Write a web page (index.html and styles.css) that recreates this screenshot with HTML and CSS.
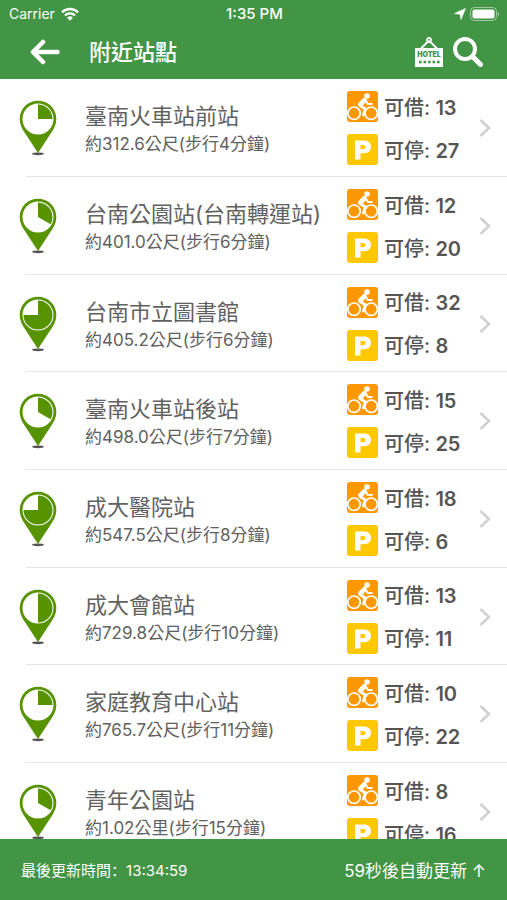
FILE: index.html
```html
<!DOCTYPE html>
<html lang="zh-Hant">
<head>
    <meta charset="UTF-8">
    <meta name="viewport" content="width=device-width, initial-scale=1.0">
    <title>附近站點</title>
    <link rel="stylesheet" href="styles.css">
</head>
<body>

    <!-- shared icons -->
    <svg class="sprite" aria-hidden="true">
        <symbol id="pin" viewBox="0 0 40 56">
            <ellipse cx="20" cy="53.8" rx="6" ry="1.4" fill="#555"/>
            <path d="M20 0.8C9.7 0.8 1.7 9 1.7 19c0 4.200 1.300 7.600 3.600 11.600L20 53l14.700-22.400c2.300-4 3.600-7.400 3.600-11.600C38.300 9 30.300 0.800 20 0.800z" fill="#579300"/>
            <circle cx="20" cy="19" r="15.500" fill="#fff"/>
        </symbol>
        <symbol id="bike" viewBox="0 0 31 31">
            <rect width="31" height="31" rx="3" fill="#ff9800"/>
            <g fill="none" stroke="#fff" stroke-linecap="round" stroke-linejoin="round">
                <circle cx="7" cy="22.200" r="6.200" stroke-width="1.700"/>
                <circle cx="24.200" cy="22.200" r="6.200" stroke-width="1.700"/>
                <path d="M17.300 9.300l-3.800 4" stroke-width="4.800"/>
                <path d="M12.800 14.500l5.400 3.300-1.700 6.200" stroke-width="2.800"/>
                <path d="M18.500 9l2.300 4h4" stroke-width="2"/>
            </g>
            <circle cx="20" cy="5" r="2.800" fill="#fff"/>
        </symbol>
        <symbol id="parking" viewBox="0 0 31 31">
            <rect width="31" height="31" rx="3" fill="#ffc800"/>
            <path d="M8 6.500h9c4.500 0 7 2.500 7 6.300s-2.700 6.400-7 6.400h-3.500v6.300H8zM13.500 11v4.200h2.700c1.500 0 2.300-.8 2.300-2.100s-.8-2.100-2.300-2.100z" fill="#fff" fill-rule="evenodd"/>
        </symbol>
        <symbol id="chevron" viewBox="0 0 12 20">
            <path d="M1.500 2l8.500 8-8.500 8" fill="none" stroke="#d0d0d0" stroke-width="2.500"/>
        </symbol>
    </svg>

    <header class="header">
        <div class="status">
            <div class="carrier">
                <span>Carrier</span>
                <svg class="wifi" viewBox="0 0 18 14">
                    <g fill="none" stroke="#fff" stroke-width="2.400">
                        <path d="M1 5.300a11.300 11.300 0 0 1 16 0"/>
                        <path d="M4 8.500a7 7 0 0 1 10 0"/>
                    </g>
                    <path d="M9 13.700l-2.900-2.900a4.100 4.100 0 0 1 5.800 0z" fill="#fff"/>
                </svg>
            </div>
            <div class="clock">1:35 PM</div>
            <div class="battery">
                <svg class="location" viewBox="0 0 12 12">
                    <path d="M11.500.5L7 11.500 6 6.200.5 5.500z" fill="#fff" stroke="#fff" stroke-width=".6"/>
                </svg>
                <svg class="level" viewBox="0 0 30 14">
                    <rect x=".5" y=".5" width="26" height="13" rx="4" fill="none" stroke="#fff" stroke-opacity=".5"/>
                    <rect x="2.500" y="2.500" width="22" height="9" rx="2" fill="#fff"/>
                    <path d="M28 5c1.500.5 1.500 3.500 0 4z" fill="#fff" fill-opacity=".6"/>
                </svg>
            </div>
        </div>
        <div class="nav">
            <button class="back" aria-label="返回">
                <svg viewBox="0 0 30 26">
                    <path d="M13 3L3 13l10 10M3.500 13H27.500" fill="none" stroke="#fff" stroke-width="4.500" stroke-linecap="round" stroke-linejoin="round"/>
                </svg>
            </button>
            <h1 class="title">附近站點</h1>
            <button class="hotel" aria-label="旅館">
                <svg viewBox="0 0 30 30">
                    <path d="M6 12.500l8-8h2l8 8" fill="none" stroke="#fff" stroke-width="1.800"/>
                    <circle cx="15" cy="3" r="2" fill="none" stroke="#fff" stroke-width="1.800"/>
                    <path d="M1 11h28v19H1z" fill="#fff"/>
                    <text class="hotel-text" x="15" y="20">HOTEL</text>
                    <path d="M5 25h21" stroke="#429545" stroke-width="2.500" stroke-dasharray="2.600 1.900"/>
                </svg>
            </button>
            <button class="search" aria-label="搜尋">
                <svg viewBox="0 0 30 30">
                    <circle cx="12" cy="12" r="10" fill="none" stroke="#fff" stroke-width="4"/>
                    <path d="M19.500 19.500l8 8" stroke="#fff" stroke-width="5" stroke-linecap="round"/>
                </svg>
            </button>
        </div>
    </header>

    <main class="list">
        <a class="station" href="#">
            <svg class="pin" viewBox="0 0 40 56"><use href="#pin"/><path class="pie" d="M20 19V4.500A14.500 14.500 0 0 1 34.500 19z"/></svg>
            <div class="info">
                <div class="name">臺南火車站前站</div>
                <div class="distance">約312.6公尺(步行4分鐘)</div>
            </div>
            <div class="counts">
                <div class="count"><svg class="badge"><use href="#bike"/></svg><span class="label">可借: <b>13</b></span></div>
                <div class="count"><svg class="badge"><use href="#parking"/></svg><span class="label">可停: <b>27</b></span></div>
            </div>
            <svg class="chevron"><use href="#chevron"/></svg>
        </a>
        <a class="station" href="#">
            <svg class="pin" viewBox="0 0 40 56"><use href="#pin"/><path class="pie" d="M20 19V4.500A14.500 14.500 0 0 1 32.600 26.200z"/></svg>
            <div class="info">
                <div class="name">台南公園站(台南轉運站)</div>
                <div class="distance">約401.0公尺(步行6分鐘)</div>
            </div>
            <div class="counts">
                <div class="count"><svg class="badge"><use href="#bike"/></svg><span class="label">可借: <b>12</b></span></div>
                <div class="count"><svg class="badge"><use href="#parking"/></svg><span class="label">可停: <b>20</b></span></div>
            </div>
            <svg class="chevron"><use href="#chevron"/></svg>
        </a>
        <a class="station" href="#">
            <svg class="pin" viewBox="0 0 40 56"><use href="#pin"/><path class="pie" d="M20 19V4.500A14.500 14.500 0 1 1 5.500 19z"/></svg>
            <div class="info">
                <div class="name">台南市立圖書館</div>
                <div class="distance">約405.2公尺(步行6分鐘)</div>
            </div>
            <div class="counts">
                <div class="count"><svg class="badge"><use href="#bike"/></svg><span class="label">可借: <b>32</b></span></div>
                <div class="count"><svg class="badge"><use href="#parking"/></svg><span class="label">可停: <b>8</b></span></div>
            </div>
            <svg class="chevron"><use href="#chevron"/></svg>
        </a>
        <a class="station" href="#">
            <svg class="pin" viewBox="0 0 40 56"><use href="#pin"/><path class="pie" d="M20 19V4.500A14.500 14.500 0 0 1 32.600 26.200z"/></svg>
            <div class="info">
                <div class="name">臺南火車站後站</div>
                <div class="distance">約498.0公尺(步行7分鐘)</div>
            </div>
            <div class="counts">
                <div class="count"><svg class="badge"><use href="#bike"/></svg><span class="label">可借: <b>15</b></span></div>
                <div class="count"><svg class="badge"><use href="#parking"/></svg><span class="label">可停: <b>25</b></span></div>
            </div>
            <svg class="chevron"><use href="#chevron"/></svg>
        </a>
        <a class="station" href="#">
            <svg class="pin" viewBox="0 0 40 56"><use href="#pin"/><path class="pie" d="M20 19V4.500A14.500 14.500 0 1 1 5.500 19z"/></svg>
            <div class="info">
                <div class="name">成大醫院站</div>
                <div class="distance">約547.5公尺(步行8分鐘)</div>
            </div>
            <div class="counts">
                <div class="count"><svg class="badge"><use href="#bike"/></svg><span class="label">可借: <b>18</b></span></div>
                <div class="count"><svg class="badge"><use href="#parking"/></svg><span class="label">可停: <b>6</b></span></div>
            </div>
            <svg class="chevron"><use href="#chevron"/></svg>
        </a>
        <a class="station" href="#">
            <svg class="pin" viewBox="0 0 40 56"><use href="#pin"/><path class="pie" d="M20 4.500A14.500 14.500 0 0 1 20 33.500z"/></svg>
            <div class="info">
                <div class="name">成大會館站</div>
                <div class="distance">約729.8公尺(步行10分鐘)</div>
            </div>
            <div class="counts">
                <div class="count"><svg class="badge"><use href="#bike"/></svg><span class="label">可借: <b>13</b></span></div>
                <div class="count"><svg class="badge"><use href="#parking"/></svg><span class="label">可停: <b>11</b></span></div>
            </div>
            <svg class="chevron"><use href="#chevron"/></svg>
        </a>
        <a class="station" href="#">
            <svg class="pin" viewBox="0 0 40 56"><use href="#pin"/><path class="pie" d="M20 19V4.500A14.500 14.500 0 0 1 34.500 19z"/></svg>
            <div class="info">
                <div class="name">家庭教育中心站</div>
                <div class="distance">約765.7公尺(步行11分鐘)</div>
            </div>
            <div class="counts">
                <div class="count"><svg class="badge"><use href="#bike"/></svg><span class="label">可借: <b>10</b></span></div>
                <div class="count"><svg class="badge"><use href="#parking"/></svg><span class="label">可停: <b>22</b></span></div>
            </div>
            <svg class="chevron"><use href="#chevron"/></svg>
        </a>
        <a class="station" href="#">
            <svg class="pin" viewBox="0 0 40 56"><use href="#pin"/><path class="pie" d="M20 19V4.500A14.500 14.500 0 0 1 32.600 26.200z"/></svg>
            <div class="info">
                <div class="name">青年公園站</div>
                <div class="distance">約1.02公里(步行15分鐘)</div>
            </div>
            <div class="counts">
                <div class="count"><svg class="badge"><use href="#bike"/></svg><span class="label">可借: <b>8</b></span></div>
                <div class="count"><svg class="badge"><use href="#parking"/></svg><span class="label">可停: <b>16</b></span></div>
            </div>
            <svg class="chevron"><use href="#chevron"/></svg>
        </a>
    </main>

    <footer class="footer">
        <div class="updated">最後更新時間<span class="colon" lang="zh-Hans">：</span><time>13:34:59</time></div>
        <button class="refresh">59秒後自動更新 ↑</button>
    </footer>

</body>
</html>
```
FILE: styles.css
```css
* {
    box-sizing: border-box;
}

body {
    margin: 0;
    height: 100vh;
    display: flex;
    flex-direction: column;
    background-color: #fff;
    font-family: Inter, "Noto Sans CJK TC", sans-serif;
}

svg {
    display: block;
}

button {
    padding: 0;
    border: 0;
    background: none;
    color: inherit;
    font: inherit;
}

.sprite {
    display: none;
}

.header {
    flex: none;
    background-color: #429545;
    color: #fff;
}

.status {
    display: grid;
    grid-template-columns: 1fr auto 1fr;
    align-items: center;
    height: 27px;
    padding: 0 7px 0 9px;
    font-size: 14px;
}

.carrier,
.battery {
    display: flex;
    align-items: center;
    gap: 6px;
}

.battery {
    justify-content: flex-end;
    gap: 4px;
}

.clock {
    font-size: 15px;
    font-weight: 500;
}

.wifi {
    width: 18px;
    height: 14px;
}

.location {
    width: 12px;
    height: 12px;
}

.level {
    width: 30px;
    height: 14px;
}

.nav {
    display: flex;
    align-items: center;
    height: 52px;
    padding: 0 24px 2px 30px;
}

.back svg {
    width: 30px;
    height: 26px;
}

.title {
    flex: 1;
    margin: 0 0 0 29px;
    font-size: 22px;
    font-weight: 500;
    line-height: 32px;
}

.hotel svg,
.search svg {
    width: 30px;
    height: 30px;
}

.hotel {
    margin-right: 9px;
}

.hotel-text {
    fill: #429545;
    font-size: 7px;
    font-weight: 900;
    text-anchor: middle;
}

.list {
    flex: 1;
    min-height: 0;
    overflow-y: auto;
    scrollbar-width: none;
}

.station {
    display: flex;
    align-items: center;
    height: 98px;
    padding: 0 16px 0 18px;
    background: linear-gradient(#e6e6e6, #e6e6e6) 26px 100% / 100% 1px no-repeat;
    color: #555;
    text-decoration: none;
}

.station:nth-child(3n) {
    height: 97px;
}

.pin {
    flex: none;
    width: 40px;
    height: 56px;
}

.pie {
    fill: #579300;
}

.info {
    flex: 1;
    margin-left: 27px;
    color: #616161;
    white-space: nowrap;
}

.name {
    font-size: 22px;
    line-height: 32px;
}

.distance {
    font-size: 17px;
    line-height: 24px;
}

.counts {
    display: grid;
    gap: 12px;
    width: 132px;
}

.count {
    display: flex;
    align-items: center;
    gap: 6px;
    height: 31px;
}

.label {
    padding-top: 2px;
    font-size: 20px;
    font-weight: 500;
    line-height: 28px;
}

.label b {
    font-weight: 600;
}

.badge {
    width: 31px;
    height: 31px;
}

.chevron {
    flex: none;
    width: 12px;
    height: 20px;
}

.footer {
    flex: none;
    display: flex;
    align-items: center;
    justify-content: space-between;
    height: 61px;
    padding: 0 21px;
    background-color: #429545;
    color: #fff;
}

.updated {
    font-size: 15px;
}

.colon {
    font-family: "Noto Sans CJK SC", sans-serif;
}

.refresh {
    font-size: 17px;
}
```
